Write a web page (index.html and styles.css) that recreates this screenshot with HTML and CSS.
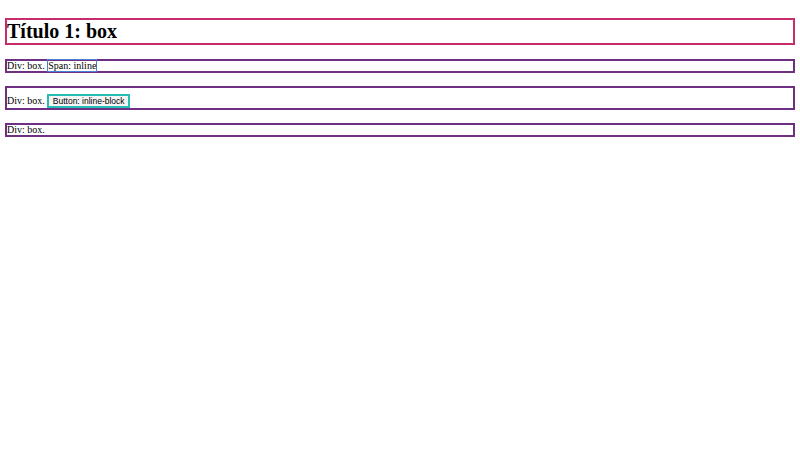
FILE: index.html
```html
<!DOCTYPE html>
<html>
<head>
<meta charset="utf-8">
<link rel="stylesheet" href="styles.css">
</head>
<body>
<h1 class="title">Título 1: box</h1>
<div class="box">Div: box. <span class="inline">Span: inline</span></div>
<div class="box box-btn">Div: box. <button class="btn">Button: inline-block</button></div>
<div class="box">Div: box.</div>
</body>
</html>
```
FILE: styles.css
```css
body {
  margin: 5px;
  font-family: "Liberation Serif", serif;
}
.title {
  font-size: 20px;
  line-height: 23px;
  font-weight: bold;
  margin: 13px 0 14px;
  border: 2px solid #c72c6c;
  padding: 0;
}
.box {
  font-size: 10px;
  line-height: 10px;
  border: 2px solid #6f2f82;
  margin: 0 0 13px;
  padding: 0;
}
.inline {
  border: 1.5px solid #4a7fd4;
}
.box-btn {
  padding: 6px 0 0;
  line-height: 14px;
}
.btn {
  font-family: "Liberation Sans", Arial, sans-serif;
  font-size: 8.5px;
  line-height: 10px;
  background: #f4f4f4;
  border: 2px solid #25bdb5;
  padding: 0 3.5px;
  margin: 0;
  color: #000;
}
```
